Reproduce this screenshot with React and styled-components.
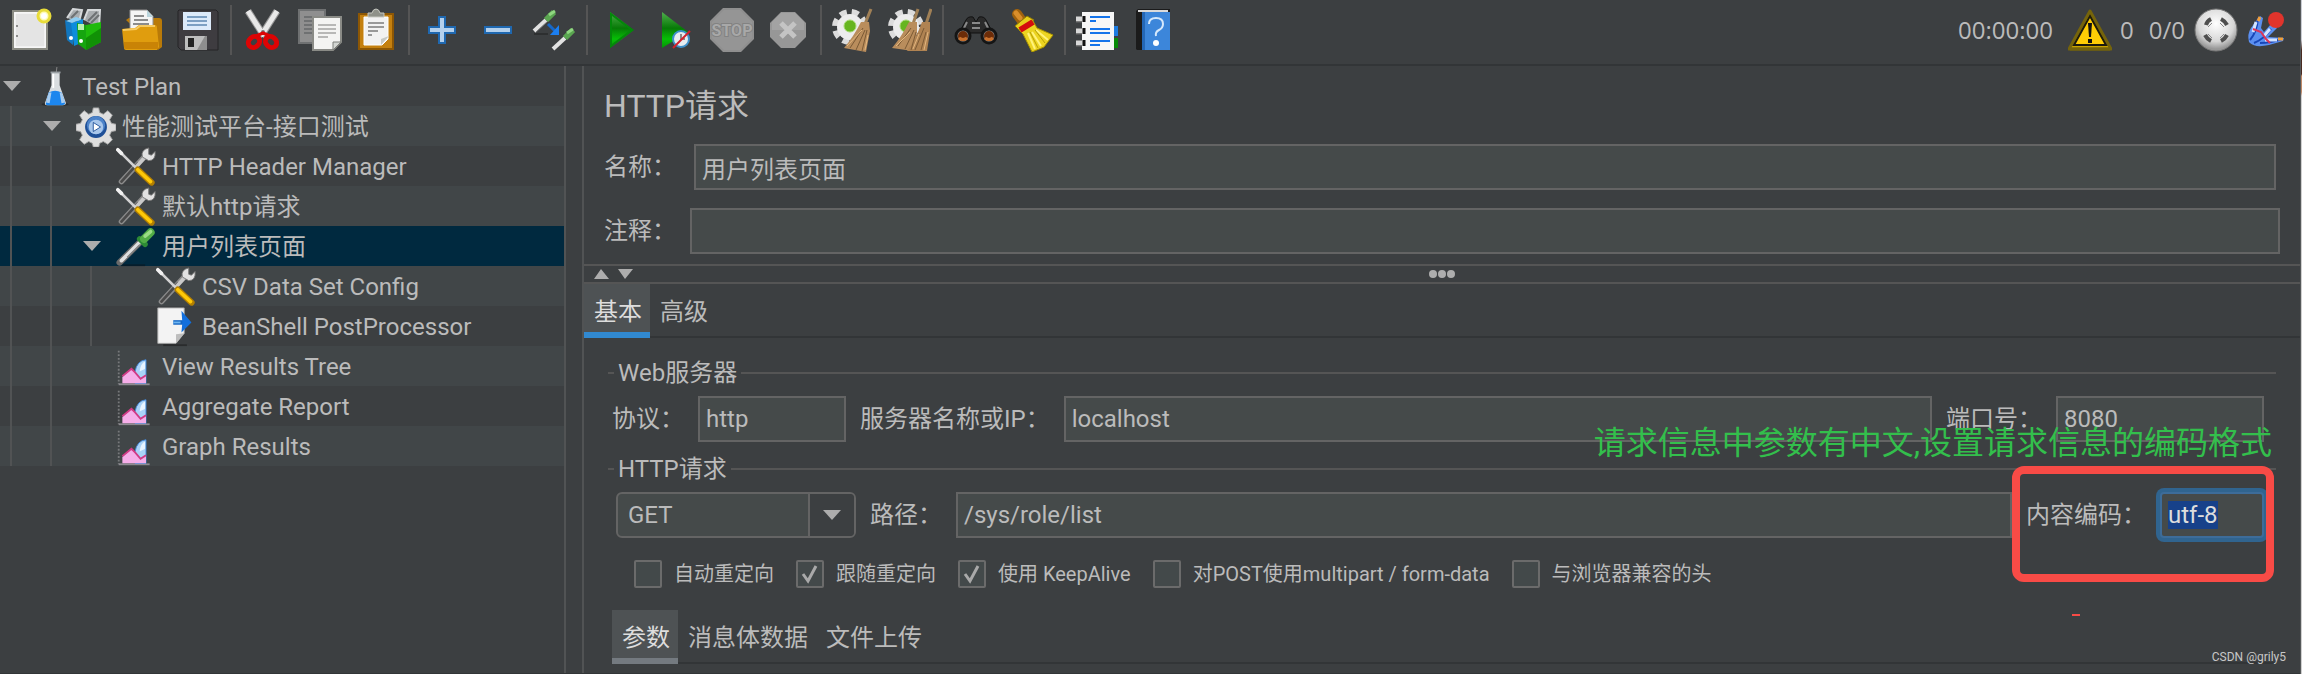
import React, { useEffect, useRef, useState } from 'react';
import styled, { createGlobalStyle } from 'styled-components';

const GlobalStyle = createGlobalStyle`
  * {
    box-sizing: border-box;
  }

  body {
    margin: 0;
    background: #3c3f41;
    color: #bbbbbb;
    font-family: Roboto, 'Noto Sans CJK SC', sans-serif;
    font-size: 24px;
    line-height: 34px;
  }

  button,
  input,
  select {
    font: inherit;
    color: inherit;
  }
`;

/* ---------- toolbar icons ---------- */

const Icon = ({ size = 44, children }) => (
  <svg width={size} height={size} viewBox='0 0 44 44' aria-hidden='true'>
    {children}
  </svg>
);

const NewIcon = () => (
  <Icon>
    <rect x='5' y='3' width='34' height='38' fill='#ececec' stroke='#8b8c84' strokeWidth='2' />
    <rect x='7' y='5' width='30' height='34' fill='#e4e4e4' stroke='#fff' strokeWidth='1' />
    <path d='M9 17v2M9 27v2' stroke='#8a8a8a' strokeWidth='2' />
    <circle cx='36' cy='8' r='6' fill='#fffbb8' stroke='#e8dc3a' strokeWidth='3' />
    <circle cx='36' cy='8' r='3' fill='#fff' />
  </Icon>
);

const TemplatesIcon = () => (
  <Icon>
    <path d='M3 10 9 1l9 1-3 12M20 12l4-10 12 0-1 18' fill='#a9adb0' stroke='#d5d8da' strokeWidth='2' />
    <path d='M7 10 14 3M24 13l9-9M27 15l8-8' stroke='#6d7173' strokeWidth='2' />
    <path d='M1 12 9 15v22L3 32z' fill='#1277c0' />
    <path d='M7 15 19 11v23l-9 4z' fill='#0d8ddd' />
    <path d='M2 13 8 15 18 11 12 9z' fill='#8fcdf2' />
    <circle cx='7' cy='30' r='2' fill='#fff' />
    <path d='M13 15 22 17v25L14 36z' fill='#16a50f' />
    <path d='M22 17 37 14v20L22 42z' fill='#1fba0c' />
    <path d='M22 30 37 20v14L22 42z' fill='#119106' />
    <path d='M14 16h6v6h-6z' fill='#b8f2b0' />
    <circle cx='17' cy='33' r='2' fill='#fff' />
  </Icon>
);

const OpenIcon = () => (
  <Icon>
    <path d='M6 12 9 10h30q3 0 3 3v26l-4 3z' fill='#b97a08' />
    <path d='M10 2h17l6 6v18H10z' fill='#f4f4f4' stroke='#8f8f8f' strokeWidth='1' />
    <path d='M14 8h10M14 12h14M13 16h16' stroke='#8c8c8c' strokeWidth='2' />
    <path d='M27 2v7h6' fill='#b9d4dc' />
    <path d='M2 21 15 20l4-3h16q2 0 2 3l2 19-2 3H6q-2 0-2-2z' fill='#e09d0e' />
    <path d='M3 22 16 21l4-3h15' fill='none' stroke='#f7cb62' strokeWidth='2' />
    <path d='M4 34h34v7H6q-2 0-2-2z' fill='#c98306' />
  </Icon>
);

const SaveIcon = () => (
  <Icon>
    <path d='M3 2h37l2 2v38H5l-3-3V3z' fill='#3e3c40' stroke='#252427' strokeWidth='1' />
    <rect x='7' y='4' width='28' height='18' fill='#dceafa' />
    <path d='M11 9h20M11 13h20M11 17h20' stroke='#7c9fc3' strokeWidth='2' />
    <rect x='9' y='28' width='22' height='14' fill='#bdbdbd' />
    <rect x='12' y='30' width='6' height='9' fill='#232323' />
    <path d='M21 42 29 28h2v14z' fill='#8e8e8e' />
  </Icon>
);

const CutIcon = () => (
  <Icon>
    <path d='M6 3 22 28' stroke='#999' strokeWidth='7' />
    <path d='M35 3 19 28' stroke='#999' strokeWidth='7' />
    <path d='M6 3 22 28M35 3 19 28' stroke='#e9e9e9' strokeWidth='5' />
    <circle cx='21' cy='24' r='2' fill='#777' />
    <ellipse cx='12' cy='34' rx='6' ry='5' transform='rotate(-40 12 34)' fill='none' stroke='#dd0404' strokeWidth='5' />
    <ellipse cx='29' cy='34' rx='6' ry='5' transform='rotate(40 29 34)' fill='none' stroke='#dd0404' strokeWidth='5' />
    <path d='M14 28 21 25l7 3' fill='none' stroke='#dd0404' strokeWidth='3' />
  </Icon>
);

const CopyIcon = () => (
  <Icon>
    <rect x='1' y='2' width='26' height='33' fill='#8f8f8f' stroke='#6f7172' strokeWidth='2' />
    <path d='M6 9h16M6 13h16M6 17h8M6 21h8M6 25h8' stroke='#6f7172' strokeWidth='2' />
    <path d='M15 9h28v25l-8 8H15z' fill='#f4f4f2' stroke='#8a8b86' strokeWidth='2' />
    <path d='M20 17h18M20 21h18M20 25h18M20 29h10' stroke='#b8b8b6' strokeWidth='2' />
    <path d='M43 34 35 42v-8z' fill='#d3d6d2' stroke='#7d7f7a' strokeWidth='1' />
  </Icon>
);

const PasteIcon = () => (
  <Icon>
    <rect x='5' y='6' width='34' height='35' fill='#c4800f' stroke='#8d5704' strokeWidth='2' />
    <path d='M10 9h24v22l-6 6H10z' fill='#f2f2f2' stroke='#fff' strokeWidth='1' />
    <path d='M14 15h16M14 19h16M14 23h10M14 27h4' stroke='#999' strokeWidth='2' />
    <path d='M35 28 27 37v-6z' fill='#c7c9c4' />
    <path d='M14 9V5h4q1-4 4-4t4 4h4v4z' fill='#8f9189' stroke='#c5c6bf' strokeWidth='1' />
  </Icon>
);

const PlusIcon = () => (
  <Icon>
    <path d='M19 9h6v10h10v6H25v10h-6V25H9v-6h10z' fill='#b4d0ec' stroke='#1f68b0' strokeWidth='2' />
  </Icon>
);

const MinusIcon = () => (
  <Icon>
    <rect x='9' y='19' width='26' height='6' fill='#b4d0ec' stroke='#1f68b0' strokeWidth='2' />
  </Icon>
);

const ToggleIcon = () => (
  <Icon>
    <path d='M2 23 14 12' stroke='#e2e2e2' strokeWidth='4' />
    <path d='M3 25 16 13' stroke='#77797a' strokeWidth='1' />
    <path d='M14 12 22 4' stroke='#5aa550' strokeWidth='6' />
    <path d='M17 7 23 3' stroke='#8fd780' strokeWidth='3' />
    <path d='M2 26h14' stroke='#2d2f30' strokeWidth='2' />
    <path d='M16 16 23 23' stroke='#1667c8' strokeWidth='3' />
    <path d='M27 17v10H18z' fill='#1b7ef0' />
    <path d='M21 41 33 30' stroke='#e2e2e2' strokeWidth='4' />
    <path d='M33 30 41 22' stroke='#5aa550' strokeWidth='6' />
    <path d='M35 25 41 21' stroke='#8fd780' strokeWidth='3' />
  </Icon>
);

const StartIcon = () => (
  <Icon>
    <defs>
      <linearGradient id='play' x1='0' y1='0' x2='0' y2='1'>
        <stop offset='0' stopColor='#4fae4c' />
        <stop offset='.45' stopColor='#077a07' />
        <stop offset='.75' stopColor='#06bf06' />
        <stop offset='1' stopColor='#079207' />
      </linearGradient>
    </defs>
    <path d='M12 4 36 22 12 40z' fill='url(#play)' />
    <path d='M13 6v32L34 22z' fill='none' stroke='#04870a' strokeWidth='2' />
  </Icon>
);

const StartNoPausesIcon = () => (
  <Icon>
    <path d='M8 4 34 24 8 40z' fill='url(#play)' />
    <circle cx='27' cy='31' r='8' fill='#e6ecef' stroke='#3c8fc9' strokeWidth='2' />
    <path d='M27 26v5h4' stroke='#8a8a8a' strokeWidth='2' fill='none' />
    <path d='M19 40 36 23' stroke='#d3202a' strokeWidth='2' />
  </Icon>
);

const StopIcon = () => (
  <Icon>
    <path d='M13 0h18l13 13v18L31 44H13L0 31V13z' fill='#8f8f8f' />
    <path d='M14 2h16l12 12v16L30 42H14L2 30V14z' fill='#959595' />
    <text x='22' y='28' textAnchor='middle' fontSize='16' fontWeight='700' fill='#a8a8a8' stroke='#828282' strokeWidth='2' paintOrder='stroke'>
      STOP
    </text>
  </Icon>
);

const ShutdownIcon = () => (
  <Icon>
    <path d='M15 4h14l11 11v14L29 40H15L4 29V15z' fill='#979797' />
    <path d='M15 5h14l9 9v8H6v-8z' fill='#a3a3a3' />
    <path d='M15 15 29 29M29 15 15 29' stroke='#c4c4c4' strokeWidth='5' />
  </Icon>
);

const GearShape = () => (
  <>
    <circle cx='18' cy='19' r='15' fill='none' stroke='#dcdcdc' strokeWidth='6' strokeDasharray='7 5' />
    <circle cx='18' cy='19' r='13' fill='#ececec' />
    <circle cx='18' cy='18' r='6' fill='#66b51f' stroke='#a4d870' strokeWidth='1' />
  </>
);

const ClearIcon = () => (
  <Icon>
    <GearShape />
    <path d='M39 1 33 16' stroke='#a08056' strokeWidth='3' />
    <path d='M29 14h8l1 9-4 21-22-4q10-12 17-26z' fill='#b98d5c' />
    <path d='M31 20 18 40M33 22 24 42M35 22 30 43' stroke='#7b5a35' strokeWidth='1' />
    <path d='M30 22 15 38M36 27 33 42' stroke='#e3b77f' strokeWidth='1' />
  </Icon>
);

const ClearAllIcon = () => (
  <Icon>
    <GearShape />
    <path d='M30 1 25 16M43 1 38 16' stroke='#a08056' strokeWidth='3' />
    <path d='M21 14h8v10l-4 19-21-3q10-12 17-26z' fill='#b98d5c' />
    <path d='M34 14h8l0 10-3 19-20 0q9-12 15-29z' fill='#b08352' />
    <path d='M23 20 10 38M26 22 17 41M28 24 23 42M36 20 27 42M38 24 33 42' stroke='#7b5a35' strokeWidth='1' />
    <path d='M22 24 8 38M40 24 36 42M31 26 25 41' stroke='#e3b77f' strokeWidth='1' />
  </Icon>
);

const SearchIcon = () => (
  <Icon>
    <path d='M12 12q2-4 7-3l3 5 3-5q5-1 7 3l7 13H5z' fill='#2b2b2b' stroke='#111' strokeWidth='1' />
    <path d='M13 14 8 24M31 14 36 24M18 15h8M18 20h8' stroke='#898989' strokeWidth='2' />
    <circle cx='9' cy='28' r='7' fill='#8c8c8c' stroke='#151515' strokeWidth='3' />
    <circle cx='35' cy='28' r='7' fill='#8c8c8c' stroke='#151515' strokeWidth='3' />
    <circle cx='9' cy='28' r='5' fill='#6c2c08' />
    <circle cx='35' cy='28' r='5' fill='#6c2c08' />
    <path d='M5 30q4 3 8 0M31 30q4 3 8 0' stroke='#c8702c' strokeWidth='3' fill='none' />
  </Icon>
);

const SearchResetIcon = () => (
  <Icon>
    <path d='M7 6 12 13' stroke='#a0620d' strokeWidth='10' strokeLinecap='round' />
    <path d='M6 5 10 10' stroke='#d98e2b' strokeWidth='5' strokeLinecap='round' />
    <path d='M5 18 17 8l7 4-14 11z' fill='#e8cf1c' stroke='#8f7c00' strokeWidth='1' />
    <path d='M9 22 23 13l4 7 16 7-9 12-12 5-9-18z' fill='#ecd421' stroke='#a89200' strokeWidth='1' />
    <path d='M10 22 23 14' stroke='#d40d0d' strokeWidth='6' />
    <path d='M18 25 25 41M22 24 31 38M26 22 38 32' stroke='#fff27a' strokeWidth='2' />
    <path d='M20 24 28 40M25 22 35 35' stroke='#b59e06' strokeWidth='1' />
  </Icon>
);

const FunctionIcon = () => (
  <Icon>
    <rect x='34' y='18' width='8' height='10' fill='#1c7be0' />
    <rect x='34' y='30' width='8' height='10' fill='#078a07' />
    <rect x='6' y='4' width='32' height='38' fill='#f6f6f6' />
    <path d='M14 9h20M14 13h6M14 21h20M14 25h20M14 33h20M14 37h10' stroke='#1473ea' strokeWidth='2' />
    <path d='M0 11h8M0 23h8M0 35h8' stroke='#d8d8d8' strokeWidth='5' />
    <path d='M0 14h6M0 26h6M0 38h6' stroke='#6b6b6b' strokeWidth='1' />
    <path d='M8 8v6M8 20v6M8 32v6' stroke='#111' strokeWidth='3' />
  </Icon>
);

const HelpIcon = () => (
  <Icon>
    <path d='M4 3 6 1h32l0 3v38H5l-1-1z' fill='#1b1b1b' />
    <path d='M6 2h30v2H6z' fill='#dadada' />
    <rect x='10' y='4' width='28' height='38' fill='#3c86da' />
    <path d='M10 4h3v38h-3z' fill='#2467b6' />
    <path d='M17 16q0-6 7-6t7 6q0 4-4 6t-3 6' fill='none' stroke='#d5e8fb' strokeWidth='2' />
    <circle cx='24' cy='35' r='3' fill='#fff' />
  </Icon>
);

const WarningIcon = () => (
  <Icon>
    <path d='M22 3 43 41H1z' fill='#c9a300' stroke='#75640b' strokeWidth='3' strokeLinejoin='round' />
    <path d='M22 8 38 37H6z' fill='#ffcd05' stroke='#1d1b0c' strokeWidth='2' />
    <path d='M20 15h4l-1 14h-2z' fill='#111' />
    <rect x='20' y='31' width='4' height='4' fill='#111' />
    <path d='M2 41h40' stroke='#75640b' strokeWidth='3' />
  </Icon>
);

const ThreadsIcon = () => (
  <Icon>
    <defs>
      <radialGradient id='ball' cx='.5' cy='.35' r='.6'>
        <stop offset='0' stopColor='#fff' />
        <stop offset='.7' stopColor='#d7d7d7' />
        <stop offset='1' stopColor='#979797' />
      </radialGradient>
    </defs>
    <circle cx='22' cy='22' r='21' fill='url(#ball)' stroke='#777' strokeWidth='1' />
    <path d='M12 17q1-4 5-6M27 11q4 2 6 6M33 27q-2 4-6 6M17 33q-4-2-6-6' fill='none' stroke='#4e4e4e' strokeWidth='4' />
    <path d='m14 19 4-4M26 15l4 4M30 26l-4 4M18 30l-4-4' stroke='#8a8a8a' strokeWidth='1' />
  </Icon>
);

const JMeterIcon = () => (
  <Icon>
    <path d='M3 34q-2-8 2-14t9-12l3 2-2 10 3 4 7-8 5 0 1 4-9 9 16 1-1 3-14 4q-14 3-19-2z' fill='#5b8ff0' />
    <path d='M4 32q7-8 8-22M8 35q10-4 17-14M14 35q10 0 22-4' stroke='#1746b8' strokeWidth='2' fill='none' />
    <path d='M10 14 7 24M18 28l6-7M19 32h12' stroke='#d4e4ff' strokeWidth='3' />
    <path d='M7 21 15 24 20 31 24 35' fill='none' stroke='#db3559' strokeWidth='2' />
    <path d='M14 9 12 13M32 31l5 0' stroke='#f0a03c' strokeWidth='3' />
    <circle cx='30' cy='12' r='8' fill='#e0342c' />
  </Icon>
);

/* ---------- tree icons, same 44 unit grid shown at 40px ---------- */

const FlaskIcon = () => (
  <Icon size={40}>
    <ellipse cx='21' cy='41' rx='15' ry='2' fill='#2a2c2d' />
    <path d='M23 0l-1 8' stroke='#8c8c8c' strokeWidth='1' />
    <path d='M17 6h9l0 14 7 20q0 2-3 2H12q-3 0-2-3l7-19z' fill='#d9dde0' />
    <path d='M14 28q7-4 14 0l4 12q0 2-3 2H13q-3 0-2-3z' fill='#1c86ee' />
    <path d='M11 39 14 28l3 0-2 12M32 39l-4-11-2 0 2 12' fill='#a9cdf0' />
    <path d='M19 7v16' stroke='#fff' strokeWidth='2' />
    <path d='M16 6h11' stroke='#9aa0a4' strokeWidth='2' />
  </Icon>
);

const ThreadGroupIcon = () => (
  <Icon size={40}>
    <path
      d='M19 1h6l1 5 4 2 5-4 5 5-3 5 2 4 5 1v7l-5 1-2 4 3 5-5 5-5-3-4 2-1 4h-6l-1-4-4-2-5 3-5-5 3-5-2-4-5-1v-7l5-1 2-4-3-5 5-5 5 4 4-2z'
      fill='#dedede'
      stroke='#a5a5a5'
      strokeWidth='1'
    />
    <circle cx='22' cy='22' r='12' fill='#1e4f97' />
    <circle cx='22' cy='20' r='10' fill='#4d83c9' />
    <circle cx='22' cy='22' r='8' fill='#a8c6ea' />
    <path d='m19 17 8 5-8 5z' fill='#fff' stroke='#1e4f97' strokeWidth='1' />
  </Icon>
);

const ToolsIcon = () => (
  <Icon size={40}>
    <path d='M6 38 32 10' stroke='#8b8b8b' strokeWidth='6' strokeLinecap='round' />
    <path d='M6 38 24 18' stroke='#4a4a4a' strokeWidth='3' strokeLinecap='round' />
    <path d='M22 22 33 10' stroke='#c9c9c9' strokeWidth='4' />
    <path d='M29 11q-2-8 7-10l0 7 3 1 4-4q1 10-7 10z' fill='#e2e2e2' stroke='#777' strokeWidth='1' />
    <path d='M3 4 22 23' stroke='#d2d2d2' strokeWidth='3' strokeLinecap='round' />
    <path d='M2 3 6 7' stroke='#f1f1f1' strokeWidth='4' strokeLinecap='round' />
    <path d='M24 25 39 39' stroke='#b37f00' strokeWidth='7' strokeLinecap='round' />
    <path d='M24 25 38 38' stroke='#ffc907' strokeWidth='4' strokeLinecap='round' />
  </Icon>
);

const SamplerIcon = () => (
  <Icon size={40}>
    <path d='M6 42h26' stroke='#061d2b' strokeWidth='2' />
    <path d='M4 39 28 15' stroke='#6a6a6a' strokeWidth='7' strokeLinecap='round' />
    <path d='M6 37 28 15' stroke='#dfdfdf' strokeWidth='4' strokeLinecap='round' />
    <path d='M12 33 26 19' stroke='#777' strokeWidth='1' />
    <path d='M26 13 32 19' stroke='#2d8a35' strokeWidth='6' strokeLinecap='round' />
    <path d='M31 13 38 6' stroke='#52ac46' strokeWidth='9' strokeLinecap='round' />
    <path d='M32 10 38 5' stroke='#9bdc86' strokeWidth='4' strokeLinecap='round' />
  </Icon>
);

const PostProcessorIcon = () => (
  <Icon size={40}>
    <path d='M8 42h26' stroke='#2a2c2d' strokeWidth='2' />
    <path d='M2 1h29v28L22 40H2z' fill='#f3f3f3' stroke='#a9a9a9' strokeWidth='1' />
    <path d='M31 29 22 40V30z' fill='#bdbdbd' />
    <path d='M19 17h14' stroke='#1265c4' strokeWidth='5' />
    <path d='M19 17h8' stroke='#6fb4ee' strokeWidth='2' />
    <path d='m28 4 11 13-11 11 1-11z' fill='#126fdc' />
  </Icon>
);

const ListenerIcon = () => (
  <Icon size={40}>
    <path d='M3 4v37' stroke='#77797b' strokeWidth='2' strokeDasharray='2 2' />
    <path d='M3 41h34' stroke='#8d8a90' strokeWidth='2' />
    <path d='M21 27q2-12 12-13v26H21z' fill='#a9d3f8' stroke='#4187d8' strokeWidth='1' />
    <path d='M26 27q1-9 6-11v8z' fill='#e8f4ff' />
    <path d='M7 40v-7l10-9 4 4 6 8 6-4v8z' fill='#f6aee9' />
    <path d='m7 32 10-8 4 4 6 7 6-4' fill='none' stroke='#d23a86' strokeWidth='2' />
  </Icon>
);

/* ---------- data ---------- */

const toolGroups = [
  [
    ['New', NewIcon],
    ['Templates', TemplatesIcon],
    ['Open', OpenIcon],
    ['Save', SaveIcon],
  ],
  [
    ['Cut', CutIcon],
    ['Copy', CopyIcon],
    ['Paste', PasteIcon],
  ],
  [
    ['Expand All', PlusIcon],
    ['Collapse All', MinusIcon],
    ['Toggle', ToggleIcon],
  ],
  [
    ['Start', StartIcon],
    ['Start no pauses', StartNoPausesIcon],
    ['Stop', StopIcon],
    ['Shutdown', ShutdownIcon],
  ],
  [
    ['Clear', ClearIcon],
    ['Clear All', ClearAllIcon],
  ],
  [
    ['Search', SearchIcon],
    ['Reset Search', SearchResetIcon],
  ],
  [
    ['Function Helper', FunctionIcon],
    ['Help', HelpIcon],
  ],
];

const treeNodes = [
  { label: 'Test Plan', depth: 0, icon: FlaskIcon, open: true },
  { label: '性能测试平台-接口测试', depth: 1, icon: ThreadGroupIcon, open: true },
  { label: 'HTTP Header Manager', depth: 2, icon: ToolsIcon },
  { label: '默认http请求', depth: 2, icon: ToolsIcon },
  { label: '用户列表页面', depth: 2, icon: SamplerIcon, open: true },
  { label: 'CSV Data Set Config', depth: 3, icon: ToolsIcon },
  { label: 'BeanShell PostProcessor', depth: 3, icon: PostProcessorIcon },
  { label: 'View Results Tree', depth: 2, icon: ListenerIcon },
  { label: 'Aggregate Report', depth: 2, icon: ListenerIcon },
  { label: 'Graph Results', depth: 2, icon: ListenerIcon },
];

const requestOptions = [
  { label: '自动重定向', checked: false },
  { label: '跟随重定向', checked: true },
  { label: '使用 KeepAlive', checked: true },
  { label: '对POST使用multipart / form-data', checked: false },
  { label: '与浏览器兼容的头', checked: false },
];

/* ---------- components ---------- */

function Toolbar() {
  return (
    <ToolbarStyled>
      {toolGroups.map((group, i) => (
        <React.Fragment key={i}>
          {i > 0 && <Separator />}
          {group.map(([title, ToolIcon]) => (
            <ToolButton key={title} type='button' aria-label={title}>
              <ToolIcon />
            </ToolButton>
          ))}
        </React.Fragment>
      ))}
      <Status>
        <span>00:00:00</span>
        <WarningButton type='button' aria-label='Log errors'>
          <WarningIcon />
          <span>0</span>
        </WarningButton>
        <span>0/0</span>
        <StatusIcons>
          <ThreadsIcon />
          <JMeterIcon />
        </StatusIcons>
      </Status>
    </ToolbarStyled>
  );
}

function Tree() {
  const [selected, setSelected] = useState(4);

  return (
    <TreeStyled>
      {treeNodes.map(({ label, depth, icon: NodeIcon, open }, i) => (
        <TreeRow
          key={label}
          type='button'
          $selected={i === selected}
          onClick={() => setSelected(i)}
        >
          {Array.from({ length: depth }, (_, level) => (
            <Guide key={level} />
          ))}
          <Expander>
            {open && (
              <svg width='18' height='10' viewBox='0 0 18 10'>
                <path d='M0 0h18L9 10z' fill='#adadad' />
              </svg>
            )}
          </Expander>
          <NodeCell>
            <NodeIcon />
            {label}
          </NodeCell>
        </TreeRow>
      ))}
    </TreeStyled>
  );
}

function Option({ label, checked }) {
  const [on, setOn] = useState(checked);

  return (
    <OptionLabel>
      <CheckCell>
        <CheckBox type='checkbox' checked={on} onChange={() => setOn(!on)} />
        {on && (
          <CheckMark viewBox='0 0 28 28'>
            <path d='m7 14 5 7 8-15' fill='none' stroke='#a9a9a9' strokeWidth='3' />
          </CheckMark>
        )}
      </CheckCell>
      {label}
    </OptionLabel>
  );
}

function RequestPanel() {
  const encoding = useRef(null);

  useEffect(() => {
    encoding.current.focus();
    encoding.current.select();
  }, []);

  return (
    <Panel>
      <Header>
        <Title>HTTP请求</Title>
        <NameRow>
          <label htmlFor='name'>名称：</label>
          <TextField id='name' defaultValue='用户列表页面' />
        </NameRow>
        <CommentRow>
          <label htmlFor='comment'>注释：</label>
          <TextField id='comment' />
        </CommentRow>
      </Header>

      <Divider>
        <svg width='40' height='10' viewBox='0 0 40 10'>
          <path d='M0 10h15L7 0zM24 0h15l-8 10z' fill='#adadad' />
        </svg>
        <svg width='26' height='8' viewBox='0 0 26 8'>
          <circle cx='4' cy='4' r='4' fill='#adadad' />
          <circle cx='13' cy='4' r='4' fill='#adadad' />
          <circle cx='22' cy='4' r='4' fill='#adadad' />
        </svg>
        <span />
      </Divider>

      <Tabs>
        <Tab type='button' $active $accent='#3189d0'>
          基本
        </Tab>
        <Tab type='button'>高级</Tab>
      </Tabs>

      <Content>
        <Group>
          <Legend>Web服务器</Legend>
          <ServerRow>
            <label htmlFor='protocol'>协议：</label>
            <TextField id='protocol' $width='148px' defaultValue='http' />
            <label htmlFor='domain'>服务器名称或IP：</label>
            <TextField id='domain' defaultValue='localhost' />
            <label htmlFor='port'>端口号：</label>
            <TextField id='port' $width='208px' defaultValue='8080' />
          </ServerRow>
        </Group>

        <Group>
          <Legend>HTTP请求</Legend>
          <PathRow>
            <Combo>
              <ComboSelect aria-label='Method' defaultValue='GET'>
                <option>GET</option>
                <option>POST</option>
              </ComboSelect>
              <ComboArrow>
                <svg width='18' height='10' viewBox='0 0 18 10'>
                  <path d='M0 0h18L9 10z' fill='#adadad' />
                </svg>
              </ComboArrow>
            </Combo>
            <label htmlFor='path'>路径：</label>
            <TextField id='path' defaultValue='/sys/role/list' />
            <label htmlFor='encoding'>内容编码：</label>
            <EncodingField
              id='encoding'
              ref={encoding}
              $width='104px'
              defaultValue='utf-8'
            />
          </PathRow>
        </Group>

        <Options>
          {requestOptions.map((option) => (
            <Option key={option.label} {...option} />
          ))}
        </Options>
      </Content>

      <InnerTabs>
        <Tab type='button' $active $accent='#747a80'>
          参数
        </Tab>
        <Tab type='button'>消息体数据</Tab>
        <Tab type='button'>文件上传</Tab>
      </InnerTabs>

      <Note>请求信息中参数有中文,设置请求信息的编码格式</Note>
      <Highlight />
      <Dash />
      <Watermark>CSDN @grily5</Watermark>
    </Panel>
  );
}

function App() {
  return (
    <Page>
      <GlobalStyle />
      <Window>
        <Toolbar />
        <Main>
          <Tree />
          <RequestPanel />
        </Main>
      </Window>
      <Desktop />
    </Page>
  );
}

export default App;

/* ---------- styles ---------- */

const Page = styled.div`
  display: flex;
  min-height: 100vh;
`;

const Window = styled.div`
  flex: 1;
  min-width: 0;
  display: flex;
  flex-direction: column;
  border-bottom: 1px solid #323537;
`;

// sliver of the desktop right of the window
const Desktop = styled.div`
  width: 2px;
  border-left: 1px solid #55585a;
  background: linear-gradient(
    #c9ccd2 0 40px,
    #4a2c22 50px 74px,
    #c08a68 76px 92px,
    #cfcfcf 96px
  );
`;

const ToolbarStyled = styled.header`
  display: flex;
  align-items: center;
  height: 66px;
  padding: 0 10px 4px 2px;
  border-bottom: 2px solid #323537;
`;

const ToolButton = styled.button`
  display: flex;
  justify-content: center;
  width: 56px;
  padding: 0;
  border: 0;
  background: none;
`;

const Separator = styled.div`
  width: 2px;
  height: 50px;
  margin: 0 4px;
  background: #555555;
`;

const Status = styled.div`
  display: flex;
  align-items: center;
  gap: 15px;
  margin-left: auto;
  font-family: 'Open Sans', sans-serif;
`;

const WarningButton = styled.button`
  display: flex;
  align-items: center;
  gap: 8px;
  padding: 0;
  border: 0;
  background: none;
`;

const StatusIcons = styled.div`
  display: flex;
  gap: 8px;
  margin-left: -6px;
`;

const Main = styled.main`
  flex: 1;
  display: grid;
  grid-template-columns: 566px 1fr;
  column-gap: 16px;
`;

const TreeStyled = styled.nav`
  border-right: 2px solid #515354;
`;

const TreeRow = styled.button`
  display: flex;
  align-items: center;
  width: 100%;
  height: 40px;
  padding: 0;
  border: 0;
  text-align: left;
  background: ${(props) => (props.$selected ? '#00293f' : '#3c3f41')};

  &:nth-child(even) {
    background: ${(props) => (props.$selected ? '#00293f' : '#414648')};
  }
`;

const Guide = styled.span`
  width: 2px;
  height: 40px;
  margin: 0 28px 0 10px;
  background: #515354;
`;

const Expander = styled.span`
  display: flex;
  justify-content: center;
  width: 24px;
  margin-right: 12px;
`;

const NodeCell = styled.span`
  display: flex;
  align-items: center;
  gap: 6px;
  padding-top: 2px;
  white-space: nowrap;
`;

const Panel = styled.section`
  position: relative;
  min-width: 0;
  border-left: 2px solid #515354;
`;

const Header = styled.div`
  display: grid;
  gap: 18px;
  padding: 20px 20px 10px 20px;
`;

const Title = styled.h1`
  margin: 0;
  font-size: 32px;
  font-weight: 400;
  line-height: 40px;
`;

const FieldRow = styled.div`
  display: flex;
  align-items: center;
  white-space: nowrap;
`;

const NameRow = styled(FieldRow)`
  gap: 18px;
  padding-right: 4px;
`;

const CommentRow = styled(FieldRow)`
  gap: 14px;
`;

const TextField = styled.input`
  flex: ${(props) => (props.$width ? 'none' : '1')};
  width: ${(props) => props.$width || 'auto'};
  min-width: 0;
  height: 46px;
  padding: 0 6px;
  border: 2px solid #646464;
  border-radius: 0;
  outline: none;
  background: #454a4a;
`;

const EncodingField = styled(TextField)`
  border-color: #3d6c99;
  border-radius: 4px;
  box-shadow: 0 0 0 4px #30648f;

  &::selection {
    color: #dddddd;
    background: #17418a;
  }
`;

const Divider = styled.div`
  display: grid;
  grid-template-columns: 1fr auto 1fr;
  align-items: center;
  height: 20px;
  padding: 0 10px;
  border: solid #555555;
  border-width: 2px 0;
`;

const Tabs = styled.div`
  display: flex;
  height: 54px;
  box-shadow: inset 0 -2px #323537;
`;

const InnerTabs = styled(Tabs)`
  margin: 0 24px 0 28px;
`;

const Tab = styled.button`
  padding: 0 8px 0 10px;
  border: 0;
  border-top: 8px solid transparent;
  border-bottom: 6px solid ${(props) => props.$accent || 'transparent'};
  color: ${(props) => (props.$active ? '#dddddd' : '#bbbbbb')};
  background: ${(props) => (props.$active ? '#4e5254' : 'none')};
`;

const Content = styled.div`
  padding: 18px 24px 22px;
`;

const Group = styled.fieldset`
  min-width: 0;
  margin: 0 0 10px;
  padding: 0;
  border: 0;
`;

const Legend = styled.legend`
  display: flex;
  align-items: center;
  gap: 4px;
  width: 100%;
  margin-bottom: 6px;
  padding: 0;

  &::before,
  &::after {
    content: '';
    width: 6px;
    height: 2px;
    background: #555555;
  }

  &::after {
    flex: 1;
  }
`;

const ServerRow = styled(FieldRow)`
  gap: 14px;
  padding: 0 12px 0 4px;
`;

const PathRow = styled(FieldRow)`
  gap: 14px;
  padding: 0 12px 0 8px;
`;

const Combo = styled.div`
  display: flex;
  width: 240px;
  height: 46px;
  border: 2px solid #646464;
  border-radius: 6px;
  background: #454a4a;
`;

const ComboSelect = styled.select`
  flex: 1;
  padding: 0 10px;
  border: 0;
  outline: none;
  appearance: none;
  background: none;
`;

const ComboArrow = styled.span`
  display: flex;
  align-items: center;
  justify-content: center;
  width: 46px;
  border-left: 2px solid #646464;
  border-radius: 0 4px 4px 0;
  background: #3c3f41;
  pointer-events: none;
`;

const Options = styled.div`
  display: flex;
  gap: 22px;
  margin-top: 22px;
  padding-left: 26px;
`;

const OptionLabel = styled.label`
  display: flex;
  align-items: center;
  gap: 12px;
  font-size: 20px;
  line-height: 28px;
  white-space: nowrap;
`;

const CheckCell = styled.span`
  display: grid;
  width: 28px;
  height: 28px;
`;

const CheckBox = styled.input`
  grid-area: 1 / 1;
  width: 28px;
  height: 28px;
  margin: 0;
  border: 2px solid #6b6b6b;
  border-radius: 2px;
  appearance: none;
  background: #43494a;
`;

const CheckMark = styled.svg`
  grid-area: 1 / 1;
  pointer-events: none;
`;

// marker drawings laid over the form
const Note = styled.p`
  position: absolute;
  top: 357px;
  right: 28px;
  margin: 0;
  color: #33bf4c;
  font-size: 32px;
  line-height: 40px;
  white-space: nowrap;
`;

const Highlight = styled.div`
  position: absolute;
  top: 400px;
  right: 26px;
  width: 262px;
  height: 116px;
  border: 8px solid #f84b46;
  border-radius: 12px;
  pointer-events: none;
`;

const Dash = styled.div`
  position: absolute;
  top: 548px;
  right: 220px;
  width: 8px;
  height: 2px;
  background: #f84b46;
`;

const Watermark = styled.span`
  position: absolute;
  right: 14px;
  bottom: 6px;
  color: #c8c8c8;
  font-size: 12px;
  line-height: 20px;
`;
